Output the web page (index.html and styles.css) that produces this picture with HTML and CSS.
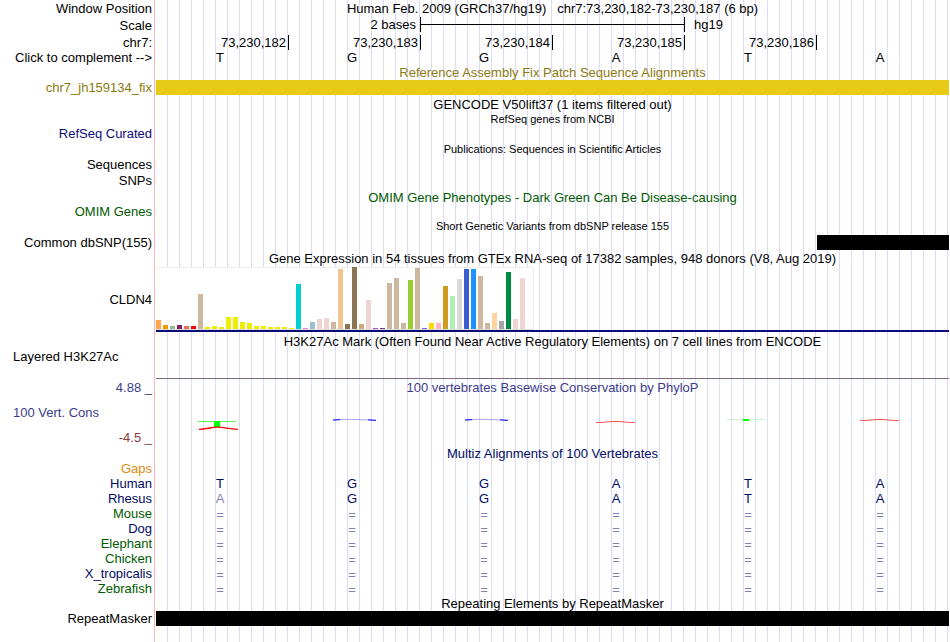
FILE: index.html
```html
<!DOCTYPE html>
<html lang="en">
<head>
  <meta charset="UTF-8" />
  <meta name="viewport" content="width=device-width, initial-scale=1.0" />
  <title>Human chr7:73,230,182-73,230,187 Genome Browser</title>
  <link rel="stylesheet" href="styles.css">
</head>
<body>

<main class="browser">

  <!-- position and ruler -->
  <div class="row h16">
    <div class="label">Window Position</div>
    <div class="track title">Human Feb. 2009 (GRCh37/hg19) &nbsp; chr7:73,230,182-73,230,187 (6 bp)</div>
  </div>
  <div class="row h18">
    <div class="label">Scale</div>
    <div class="track bases scale">
      <span></span><span class="scale-size">2 bases</span><span class="scale-bar"></span><span class="scale-end">hg19</span>
    </div>
  </div>
  <div class="row h16">
    <div class="label">chr7:</div>
    <div class="track bases ruler">
      <span>73,230,182</span><span>73,230,183</span><span>73,230,184</span><span>73,230,185</span><span>73,230,186</span><span></span>
    </div>
  </div>
  <div class="row h15">
    <div class="label">Click to complement --&gt;</div>
    <div class="track bases"><span>T</span><span>G</span><span>G</span><span>A</span><span>T</span><span>A</span></div>
  </div>

  <!-- fix patches -->
  <div class="row h15 olive">
    <div class="label"></div>
    <div class="track title">Reference Assembly Fix Patch Sequence Alignments</div>
  </div>
  <div class="row h15 olive">
    <div class="label">chr7_jh159134_fix</div>
    <div class="track"><div class="item patch"></div></div>
  </div>

  <!-- genes -->
  <div class="row h18">
    <div class="label"></div>
    <div class="track title">GENCODE V50lift37 (1 items filtered out)</div>
  </div>
  <div class="row h13">
    <div class="label"></div>
    <div class="track title small">RefSeq genes from NCBI</div>
  </div>
  <div class="row h15 blue">
    <div class="label">RefSeq Curated</div>
    <div class="track"></div>
  </div>

  <!-- publications -->
  <div class="row h17">
    <div class="label"></div>
    <div class="track title small">Publications: Sequences in Scientific Articles</div>
  </div>
  <div class="row h13">
    <div class="label">Sequences</div>
    <div class="track"></div>
  </div>
  <div class="row h18">
    <div class="label">SNPs</div>
    <div class="track"></div>
  </div>

  <!-- phenotypes and variants -->
  <div class="row h16 green">
    <div class="label"></div>
    <div class="track title">OMIM Gene Phenotypes - Dark Green Can Be Disease-causing</div>
  </div>
  <div class="row h13 green">
    <div class="label">OMIM Genes</div>
    <div class="track"></div>
  </div>
  <div class="row h17">
    <div class="label"></div>
    <div class="track title small">Short Genetic Variants from dbSNP release 155</div>
  </div>
  <div class="row h15">
    <div class="label">Common dbSNP(155)</div>
    <div class="track"><div class="item variant"></div></div>
  </div>

  <!-- expression -->
  <div class="row h17">
    <div class="label"></div>
    <div class="track title">Gene Expression in 54 tissues from GTEx RNA-seq of 17382 samples, 948 donors (V8, Aug 2019)</div>
  </div>
  <div class="row gtex">
    <div class="label">CLDN4</div>
    <div class="track gene-model"><div class="tissues" id="tissues"></div></div>
  </div>

  <!-- regulation -->
  <div class="row h18">
    <div class="label"></div>
    <div class="track title">H3K27Ac Mark (Often Found Near Active Regulatory Elements) on 7 cell lines from ENCODE</div>
  </div>
  <div class="row histone">
    <div class="label left">Layered H3K27Ac</div>
    <div class="track"></div>
  </div>

  <!-- conservation -->
  <div class="row h17 slate">
    <div class="label">4.88 _</div>
    <div class="track title">100 vertebrates Basewise Conservation by PhyloP</div>
  </div>
  <div class="row phylop slate">
    <div class="label left">100 Vert. Cons</div>
    <div class="track logos">
      <svg width="132" height="33" viewBox="0 0 132 33">
        <path d="M42 24.5h38" stroke="#4dff4d" />
        <path d="M58 24h6v6h-6z" fill="#00ff00" />
        <path d="M43 32.3C50 32.3 55 30.2 62 30.2S73 32.3 82 32.3" fill="none" stroke="#ff0000" stroke-width="1.3" />
      </svg>
      <svg width="132" height="33" viewBox="0 0 132 33">
        <path d="M45 23.2Q55 22 66 22.4T88 23.3" fill="none" stroke="#0000ff" stroke-opacity=".35" />
        <path d="M45 23L52 22.6M80 22.8L88 23.4" stroke="#0000ff" stroke-opacity=".9" />
      </svg>
      <svg width="132" height="33" viewBox="0 0 132 33">
        <path d="M45 23.2Q55 22 66 22.4T88 23.3" fill="none" stroke="#0000ff" stroke-opacity=".35" />
        <path d="M45 23L52 22.6M80 22.8L88 23.4" stroke="#0000ff" stroke-opacity=".9" />
      </svg>
      <svg width="132" height="33" viewBox="0 0 132 33">
        <path d="M44 25.5C54 25.5 56 24.5 64 24.5S72 25.5 83 25.5" fill="none" stroke="#ff0000" stroke-opacity=".7" />
      </svg>
      <svg width="132" height="33" viewBox="0 0 132 33">
        <path d="M43 22.5h38" stroke="#c3fac3" />
        <path d="M59 22h6v2h-6z" fill="#00ff00" />
      </svg>
      <svg width="132" height="33" viewBox="0 0 132 33">
        <path d="M44 23.5C54 23.5 56 22.5 64 22.5S72 23.5 83 23.5" fill="none" stroke="#ff0000" stroke-opacity=".7" />
      </svg>
    </div>
  </div>
  <div class="row h15 maroon">
    <div class="label">-4.5 _</div>
    <div class="track"></div>
  </div>

  <!-- alignments -->
  <div class="row h16 navy">
    <div class="label"></div>
    <div class="track title">Multiz Alignments of 100 Vertebrates</div>
  </div>
  <div class="row h15 orange">
    <div class="label">Gaps</div>
    <div class="track"></div>
  </div>
  <div class="row h15 navy">
    <div class="label">Human</div>
    <div class="track bases"><span>T</span><span>G</span><span>G</span><span>A</span><span>T</span><span>A</span></div>
  </div>
  <div class="row h15 navy">
    <div class="label">Rhesus</div>
    <div class="track bases"><span class="faded">A</span><span>G</span><span>G</span><span>A</span><span>T</span><span>A</span></div>
  </div>
  <div class="row h15 green">
    <div class="label">Mouse</div>
    <div class="track bases unaligned"><span>=</span><span>=</span><span>=</span><span>=</span><span>=</span><span>=</span></div>
  </div>
  <div class="row h15 navy">
    <div class="label">Dog</div>
    <div class="track bases unaligned"><span>=</span><span>=</span><span>=</span><span>=</span><span>=</span><span>=</span></div>
  </div>
  <div class="row h15 green">
    <div class="label">Elephant</div>
    <div class="track bases unaligned"><span>=</span><span>=</span><span>=</span><span>=</span><span>=</span><span>=</span></div>
  </div>
  <div class="row h15 green">
    <div class="label">Chicken</div>
    <div class="track bases unaligned"><span>=</span><span>=</span><span>=</span><span>=</span><span>=</span><span>=</span></div>
  </div>
  <div class="row h15 navy">
    <div class="label">X_tropicalis</div>
    <div class="track bases unaligned"><span>=</span><span>=</span><span>=</span><span>=</span><span>=</span><span>=</span></div>
  </div>
  <div class="row h15 green">
    <div class="label">Zebrafish</div>
    <div class="track bases unaligned"><span>=</span><span>=</span><span>=</span><span>=</span><span>=</span><span>=</span></div>
  </div>

  <!-- repeats -->
  <div class="row h15">
    <div class="label"></div>
    <div class="track title">Repeating Elements by RepeatMasker</div>
  </div>
  <div class="row h15">
    <div class="label">RepeatMasker</div>
    <div class="track"><div class="item"></div></div>
  </div>

</main>

<script src="script.js"></script>
</body>
</html>
```

FILE: styles.css
```css
* {
  box-sizing: border-box;
}

body {
  margin: 0;
  background: #fff;
  color: #000;
  font-family: "Liberation Sans", Arial, Helvetica, sans-serif;
  font-size: 13px;
}

/* guide lines: one every 12px in a 792px wide window */
.browser {
  min-height: 100vh;
  margin-right: 1px;
  padding-bottom: 15px;
  background-image:
    linear-gradient(#fff, #fff),
    linear-gradient(#ffb4b4, #ffb4b4),
    linear-gradient(#fff, #fff),
    repeating-linear-gradient(to right, transparent 0 11px, #dcdcf8 11px 12px);
  background-size: 154px 100%, 1px 100%, 156px 100%, auto;
  background-position: 0 0, 154px 0, 0 0, 156px 0;
  background-repeat: no-repeat;
}

.row {
  display: flex;
  gap: 4px;
}

.label {
  flex: 0 0 152px;
  display: flex;
  align-items: center;
  justify-content: flex-end;
  line-height: 15px;
  white-space: nowrap;
}

.label.left {
  justify-content: flex-start;
  padding-left: 13px;
}

.track {
  flex: 1;
  min-width: 0;
}

.title {
  display: flex;
  align-items: center;
  justify-content: center;
  line-height: 15px;
  white-space: nowrap;
}

.small {
  font-size: 11px;
}

.h13 { height: 13px; }
.h15 { height: 15px; }
.h16 { height: 16px; }
.h17 { height: 17px; }
.h18 { height: 18px; }

/* one column per base */
.bases,
.logos {
  display: grid;
  grid-template-columns: repeat(6, 1fr);
  padding-right: 1px;
}

.bases span {
  padding-right: 4px;
  line-height: 15px;
  text-align: center;
}

.scale {
  padding-top: 1px;
  padding-bottom: 2px;
}

.bases .scale-size {
  text-align: right;
}

.scale-bar {
  grid-column: span 2;
  border-left: 1px solid #000;
  background: linear-gradient(#000, #000) center / 100% 1px no-repeat;
}

.bases .scale-end {
  padding-left: 9px;
  border-left: 1px solid #000;
  text-align: left;
}

.ruler {
  padding-top: 1px;
  padding-bottom: 1px;
}

.bases.ruler span {
  padding-right: 2px;
  text-align: right;
}

.ruler span + span {
  border-left: 1px solid #000;
}

.item {
  height: 100%;
  background: #000;
}

.patch {
  background: #e8cb16;
}

.variant {
  width: 132px;
  margin-left: auto;
}

.gtex {
  height: 65px;
}

.gene-model {
  border-bottom: 2px solid #0c0c78;
}

.tissues {
  display: flex;
  align-items: flex-end;
  gap: 2px;
  width: 378px;
  height: 63px;
  border-top: 1px solid #eee;
  border-right: 1px solid #eee;
  border-bottom: 1px solid #ddd;
  background: #fff;
}

.tissues div {
  flex: 0 0 5px;
}

.histone {
  height: 29px;
}

.histone .label {
  height: 13px;
}

.histone .track {
  border-bottom: 1px solid #806878;
}

.phylop {
  height: 34px;
}

.phylop .label {
  height: 32px;
}

.logos {
  padding-top: 1px;
}

.unaligned,
.faded {
  color: #8282b4;
}

.unaligned {
  padding-top: 1px;
}

.olive { color: #8c7a10; }
.blue { color: #0c0c78; }
.green { color: #005a00; }
.slate { color: #3c3c8c; }
.maroon { color: #8c3c3c; }
.navy { color: #000a64; }
.orange { color: #e08a10; }
```

FILE: script.js
```js
// median expression per tissue: [colour, bar height]
const tissues = [
  ["#ffa54f", 9], ["#ee9a00", 4], ["#8fbc8f", 3], ["#8b1c62", 4], ["#ee6a50", 3], ["#ff0000", 3],
  ["#cdb79e", 35], ["#eeee00", 2], ["#eeee00", 3], ["#eeee00", 2], ["#eeee00", 12], ["#eeee00", 12],
  ["#eeee00", 7], ["#eeee00", 6], ["#eeee00", 3], ["#eeee00", 3], ["#eeee00", 2], ["#eeee00", 2],
  ["#eeee00", 2], ["#eeee00", 1], ["#00cdcd", 45], ["#ee82ee", 1], ["#9ac0cd", 7], ["#eed5d2", 10],
  ["#eed5d2", 11], ["#cdb79e", 7], ["#eec591", 60], ["#8b7355", 5], ["#8b7355", 62], ["#cdaa7d", 5],
  ["#eed5d2", 29], ["#b452cd", 1], ["#7a378b", 1], ["#cdb79e", 46], ["#cdb79e", 51], ["#cdb79e", 6],
  ["#9acd32", 49], ["#cdb79e", 61], ["#7a67ee", 1], ["#ffd700", 6], ["#ffb6c1", 6], ["#cd9b1d", 43],
  ["#b4eeb4", 33], ["#d9d9d9", 50], ["#3a5fcd", 60], ["#1e90ff", 60], ["#cdb79e", 53], ["#cdb79e", 6],
  ["#ffd39b", 16], ["#a6a6a6", 8], ["#008b45", 57], ["#eed5d2", 10], ["#eed5d2", 51], ["#ff00ff", 0]
];

const chart = document.getElementById("tissues");

tissues.forEach(([color, height]) => {
  const bar = document.createElement("div");
  bar.style.height = height + "px";
  bar.style.backgroundColor = color;
  chart.appendChild(bar);
});
```
